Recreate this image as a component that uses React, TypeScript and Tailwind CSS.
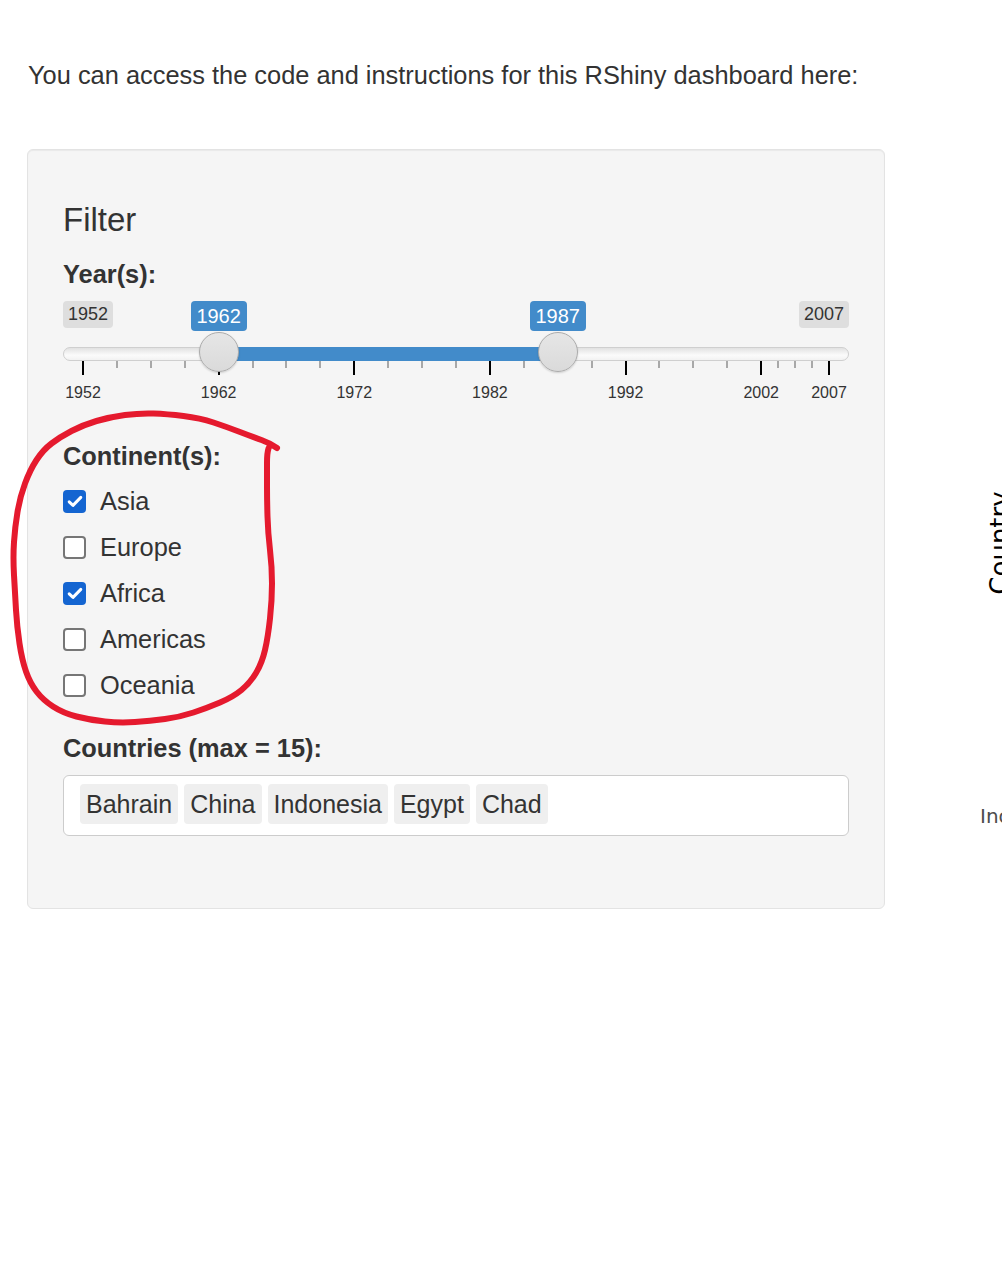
import React from "react";

const sans = "font-['Liberation_Sans',Arial,sans-serif]";

const pos = (year: number) => 20 + (year - 1952) * (746 / 55);

const majors = [1952, 1962, 1972, 1982, 1992, 2002, 2007];
const minors: number[] = [];
for (let d = 1952; d < 2002; d += 10) {
  minors.push(d + 2.5, d + 5, d + 7.5);
}
minors.push(2003.25, 2004.5, 2005.75);

const continents = [
  { name: "Asia", checked: true },
  { name: "Europe", checked: false },
  { name: "Africa", checked: true },
  { name: "Americas", checked: false },
  { name: "Oceania", checked: false },
];

const countries = ["Bahrain", "China", "Indonesia", "Egypt", "Chad"];

// hand drawn red loop round the continent group
const loop: [number, number][] = [
  [277, 448], [270, 443], [253, 437], [227, 427], [200, 418], [167, 414],
  [140, 413], [110, 417], [83, 425], [60, 437], [43, 450], [30, 470],
  [20, 497], [15, 527], [13, 557], [15, 593], [17, 627], [22, 660],
  [30, 683], [43, 700], [63, 713], [90, 720], [120, 723], [150, 721],
  [180, 717], [207, 708], [233, 697], [250, 683], [262, 663], [268, 637],
  [272, 600], [272, 567], [268, 533], [267, 500], [267, 473], [267, 453],
  [270, 444], [277, 448],
];

const smoothPath = (pts: [number, number][]) => {
  let d = `M ${pts[0][0]} ${pts[0][1]}`;
  for (let i = 1; i < pts.length - 1; i++) {
    const mx = (pts[i][0] + pts[i + 1][0]) / 2;
    const my = (pts[i][1] + pts[i + 1][1]) / 2;
    d += ` Q ${pts[i][0]} ${pts[i][1]} ${mx} ${my}`;
  }
  const last = pts[pts.length - 1];
  d += ` L ${last[0]} ${last[1]}`;
  return d;
};

const Checkbox: React.FC<{ checked: boolean }> = ({ checked }) =>
  checked ? (
    <span className="w-[23px] h-[23px] rounded-[4px] bg-[#1465d1] flex items-center justify-center shrink-0">
      <svg width="16" height="13" viewBox="0 0 16 13">
        <path
          d="M2.2 6.8 L6 10.4 L13.8 2.4"
          fill="none"
          stroke="white"
          strokeWidth="3"
          strokeLinecap="round"
          strokeLinejoin="round"
        />
      </svg>
    </span>
  ) : (
    <span className="w-[23px] h-[23px] rounded-[4px] border-2 border-[#767676] bg-white shrink-0" />
  );

const YearSlider: React.FC = () => {
  const from = pos(1962);
  const to = pos(1987);
  return (
    <div className="relative w-[786px] h-[105px]">
      <div className="flex justify-between items-start">
        <span className="h-[27px] leading-[27px] px-[5px] rounded-[4px] bg-[#dedede] text-[18px] text-[#333]">
          1952
        </span>
        <span className="h-[27px] leading-[27px] px-[5px] rounded-[4px] bg-[#dedede] text-[18px] text-[#333]">
          2007
        </span>
      </div>

      <div className="absolute left-0 right-0 top-[46px] h-[14px] rounded-full border border-[#cfcfcf] bg-[linear-gradient(to_bottom,#e2e2e2,#fbfbfb_60%,#f2f2f2)]" />
      <div
        className="absolute top-[46px] h-[14px] bg-[#428bca]"
        style={{ left: from, width: to - from }}
      />

      {minors.map((y) => (
        <span
          key={y}
          className="absolute top-[60px] w-[2px] h-[7px] bg-[#a8a8a8]"
          style={{ left: pos(y) - 1 }}
        />
      ))}
      {majors.map((y) => (
        <span
          key={y}
          className="absolute top-[60px] w-[2px] h-[14px] bg-black"
          style={{ left: pos(y) - 1 }}
        />
      ))}
      {majors.map((y) => (
        <span
          key={"l" + y}
          className="absolute top-[81px] w-[60px] -ml-[30px] text-center text-[16px] leading-[22px] text-[#333]"
          style={{ left: pos(y) }}
        >
          {y}
        </span>
      ))}

      {[from, to].map((x) => (
        <span
          key={x}
          className="absolute top-[31px] w-[40px] h-[40px] -ml-[20px] rounded-full border border-[#ababab] bg-[linear-gradient(to_bottom,#e6e6e6,#dadada)] shadow-[0_1px_2px_rgba(0,0,0,0.15)]"
          style={{ left: x }}
        />
      ))}

      {[
        { x: from, v: 1962 },
        { x: to, v: 1987 },
      ].map((l) => (
        <span
          key={l.v}
          className="absolute top-0 w-[56px] -ml-[28px] h-[30px] leading-[30px] text-center rounded-[4px] bg-[#428bca] text-white text-[20px]"
          style={{ left: l.x }}
        >
          {l.v}
        </span>
      ))}
    </div>
  );
};

const App: React.FC = () => {
  return (
    <div className={`relative w-[1002px] h-[1265px] overflow-hidden bg-white text-[#333] ${sans}`}>
      <p className="pt-[57px] pl-[28px] text-[25.4px] leading-[36px]">
        You can access the code and instructions for this RShiny dashboard here:
      </p>

      <div className="flex mt-[56px]">
        <div className="ml-[27px] w-[858px] shrink-0 rounded-[6px] border border-[#e3e3e3] bg-[#f5f5f5] shadow-[inset_0_1px_1px_rgba(0,0,0,0.05)] p-[35px]">
          <h3 className="mt-[17px] text-[33px] leading-[36px] font-normal">Filter</h3>

          <div className="mt-[18px] text-[25.4px] leading-[36px] font-bold">Year(s):</div>
          <div className="mt-[9px]">
            <YearSlider />
          </div>

          <div className="mt-[32px] text-[25.4px] leading-[36px] font-bold">Continent(s):</div>
          <div className="mt-[9px] flex flex-col gap-[10px]">
            {continents.map((c) => (
              <label key={c.name} className="h-[36px] flex items-center gap-[14px] text-[25.4px]">
                <Checkbox checked={c.checked} />
                {c.name}
              </label>
            ))}
          </div>

          <div className="mt-[27px] text-[25.4px] leading-[36px] font-bold">Countries (max = 15):</div>
          <div className="mt-[9px] mb-[36px] h-[61px] rounded-[6px] border border-[#cccccc] bg-white pl-[16px] pt-[8px] flex gap-[6px] items-start">
            {countries.map((c) => (
              <span key={c} className="h-[40px] leading-[40px] px-[6px] rounded-[4px] bg-[#efefef] text-[25px] text-[#333]">
                {c}
              </span>
            ))}
          </div>
        </div>

        {/* right plot, mostly off screen */}
        <div className="relative flex-1 h-[760px] font-['DejaVu_Sans',sans-serif]">
          <div className="absolute left-[63px] top-[379px] w-[104px] h-[30px] leading-[30px] text-center text-[26px] text-black whitespace-nowrap -rotate-90">
            Country
          </div>
          <div className="absolute left-[95px] top-[655px] text-[20px] leading-[24px] text-[#4d4d4d] whitespace-nowrap">
            Indonesia
          </div>
        </div>
      </div>

      <svg className="absolute inset-0 pointer-events-none" width="1002" height="1265">
        <path
          d={smoothPath(loop)}
          fill="none"
          stroke="#e51a2e"
          strokeWidth="6"
          strokeLinecap="round"
          strokeLinejoin="round"
        />
      </svg>
    </div>
  );
};

export default App;
